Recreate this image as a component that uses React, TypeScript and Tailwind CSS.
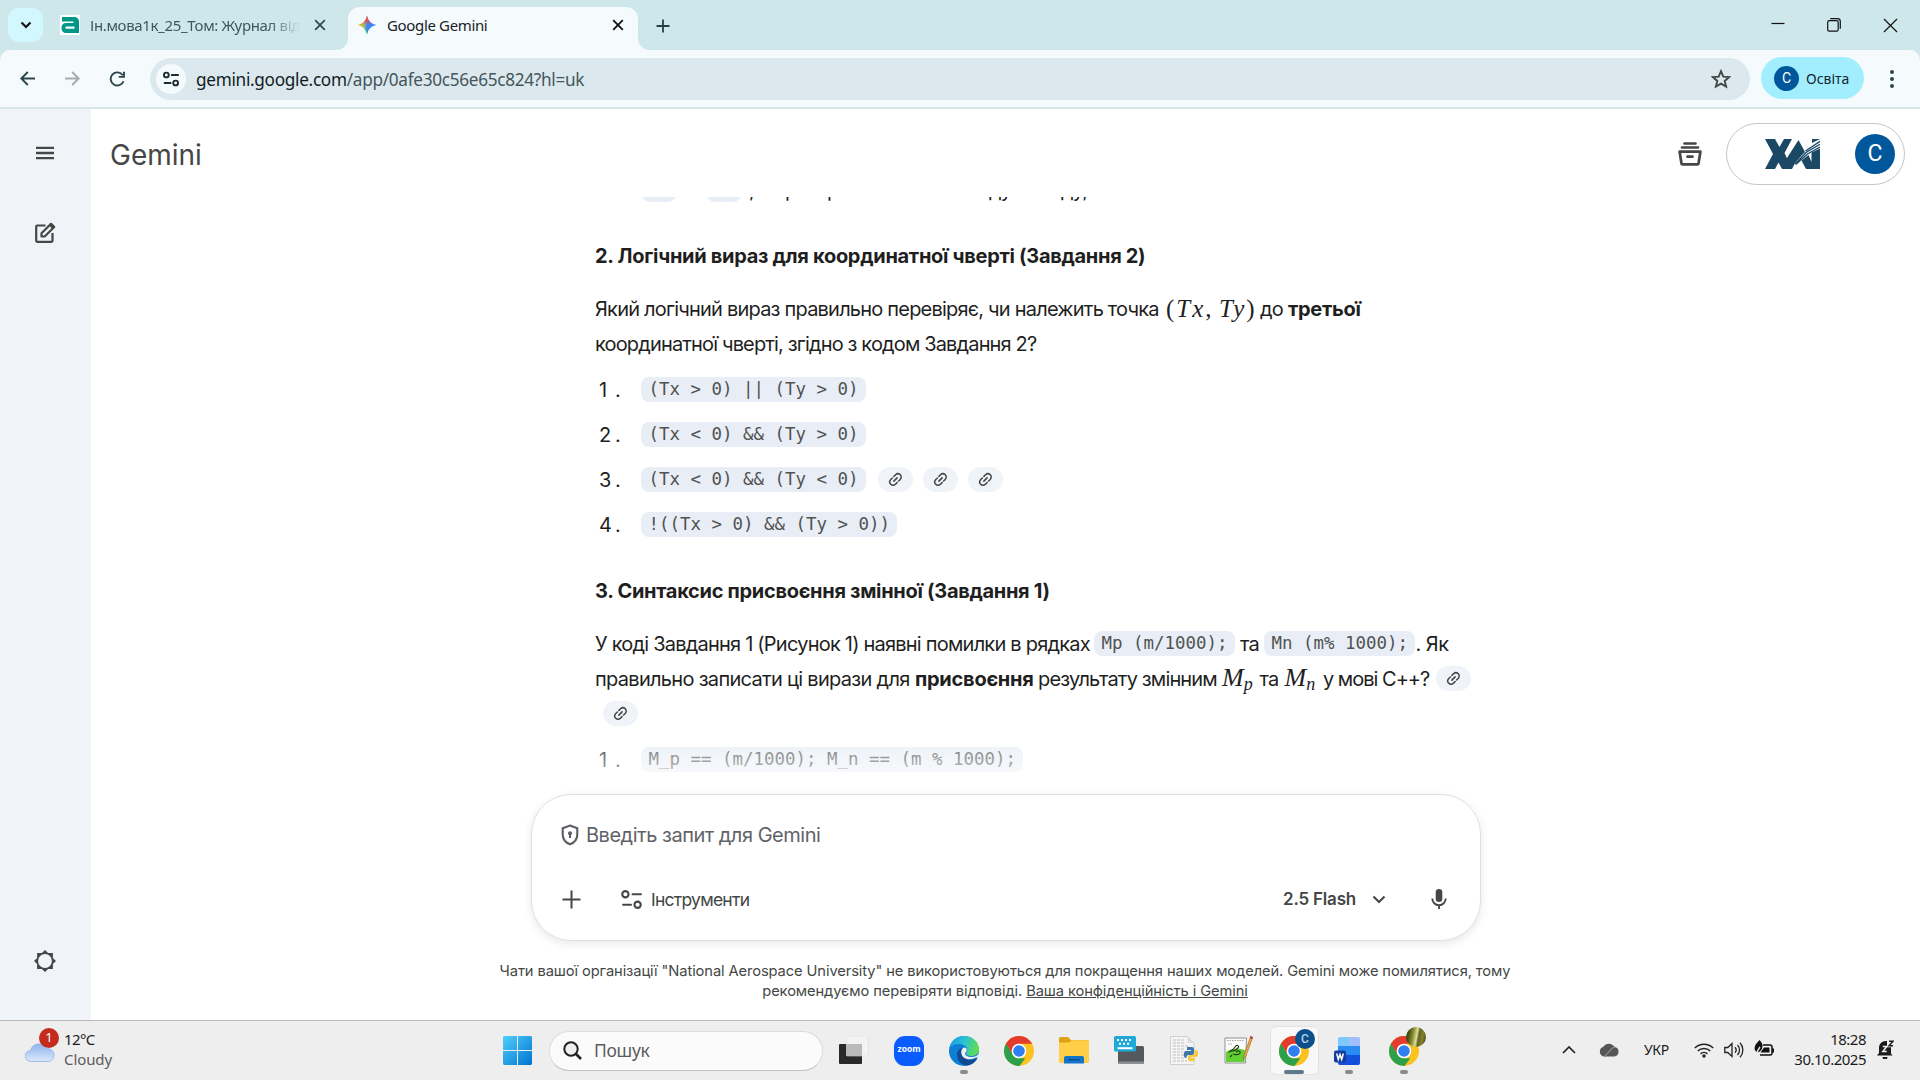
import type { ReactNode } from "react";

function Segment({ className = "", children }: { className?: string; children: ReactNode }) {
  return <span className={`shrink-0 whitespace-pre ${className}`}>{children}</span>;
}

function Code({ children, className = "" }: { children: string; className?: string }) {
  return (
    <code
      className={`flex h-[25px] shrink-0 items-center whitespace-pre rounded-[8px] bg-[#e9eef6] px-[7.5px] font-['DejaVu_Sans_Mono','Liberation_Mono',monospace] text-[17.440px] leading-none text-[#505352] ${className}`}
    >
      {children}
    </code>
  );
}

function LinkChip({ className = "" }: { className?: string }) {
  return (
    <span className={`flex h-[25px] w-[35px] shrink-0 items-center justify-center rounded-full bg-[#f0f4f9] ${className}`}>
      <svg width="15" height="15" viewBox="0 0 15 15" fill="none" stroke="#444746" strokeWidth="1.5" strokeLinecap="round">
        <g transform="rotate(-45 7.5 7.5)">
          <path d="M6.4 4.2H4.1a3.3 3.3 0 0 0 0 6.600h2.3M8.6 4.2h2.3a3.3 3.3 0 0 1 0 6.600H8.6M5.2 7.5h4.6" />
        </g>
      </svg>
    </span>
  );
}

function CloseIcon({ color }: { color: string }) {
  return (
    <svg width="12" height="12" viewBox="0 0 12 12" stroke={color} strokeWidth="1.8">
      <path d="M1.2 1.2l9.6 9.6M10.8 1.2l-9.6 9.6" />
    </svg>
  );
}

function TuneIcon({ size, width }: { size: number; width: number }) {
  return (
    <svg width={size} height={size} viewBox="0 0 20 20" fill="none" stroke="currentColor" strokeWidth={width} strokeLinecap="round">
      <circle cx="4.2" cy="5" r="3" />
      <path d="M11 5h8M2 15h7.5" />
      <circle cx="15.8" cy="15" r="3" />
    </svg>
  );
}

function TabStrip() {
  return (
    <div className="flex h-[50px] bg-[#cee7eb]">
      <div className="ml-2 mt-2 flex h-[34px] w-[35px] items-center justify-center rounded-[11px] bg-[#d3f7ff]">
        <svg width="12" height="8" viewBox="0 0 12 8" fill="none" stroke="#111" strokeWidth="2.2">
          <path d="M1.5 1.5L6 6l4.5-4.5" />
        </svg>
      </div>
      <div className="ml-[17px] flex h-[50px] w-[288px] items-center">
        <svg width="20" height="20" viewBox="0 0 20 20">
          <rect width="20" height="20" fill="#fff" />
          <path d="M2 2h12.500a4.500 4.500 0 0 1 4.500 4.500v11.500H6a4.500 4.500 0 0 1-4.500-4.500v-1A4.500 4.500 0 0 1 6 8h7.500V6.500H2z" fill="#009688" />
          <path d="M14.500 11.500H6.500a1 1 0 0 0 0 2.300h8z" fill="#fff" />
        </svg>
        <div className="ml-[10px] w-[210px] overflow-hidden whitespace-nowrap font-['Noto_Sans','Open_Sans',sans-serif] text-[15px] tracking-[-0.35px] text-[#40565c] [mask-image:linear-gradient(to_right,#000_85%,transparent)]">
          Ін.мова1к_25_Том: Журнал відвідування
        </div>
        <div className="ml-[14px] flex">
          <CloseIcon color="#354a50" />
        </div>
      </div>
      <div className="relative mt-[7px] flex h-[43px] w-[290px] items-center rounded-t-[12px] bg-[#f5fafd] pb-[7px]">
        <svg className="absolute -left-3 bottom-0" width="12" height="12" viewBox="0 0 12 12">
          <path d="M12 0v12H0A12 12 0 0 0 12 0z" fill="#f5fafd" />
        </svg>
        <svg className="absolute -right-3 bottom-0" width="12" height="12" viewBox="0 0 12 12">
          <path d="M0 0v12h12A12 12 0 0 1 0 0z" fill="#f5fafd" />
        </svg>
        <svg className="ml-[9px]" width="20" height="20" viewBox="0 0 20 20">
          <defs>
            <linearGradient id="spark" x1="0" y1="0" x2="1" y2="0">
              <stop offset="0" stopColor="#fbbc04" />
              <stop offset=".35" stopColor="#9dc06a" />
              <stop offset=".5" stopColor="#3b86f7" />
              <stop offset="1" stopColor="#3186ff" />
            </linearGradient>
            <linearGradient id="sparkRed" x1="0" y1="0" x2="0" y2="1">
              <stop offset="0" stopColor="#ff4641" />
              <stop offset=".25" stopColor="#ff4641" stopOpacity=".85" />
              <stop offset=".5" stopColor="#ff4641" stopOpacity="0" />
              <stop offset=".65" stopColor="#0ebc5f" stopOpacity="0" />
              <stop offset="1" stopColor="#0ebc5f" />
            </linearGradient>
          </defs>
          <path d="M10 .5C11.2 6 14 8.8 19.5 10 14 11.2 11.2 14 10 19.5 8.800 14 6 11.200.5 10 6 8.800 8.800 6 10 .5z" fill="url(#spark)" />
          <path d="M10 .5C11.2 6 14 8.8 19.5 10 14 11.2 11.2 14 10 19.5 8.800 14 6 11.200.5 10 6 8.800 8.800 6 10 .5z" fill="url(#sparkRed)" />
        </svg>
        <div className="ml-[10px] w-[225px] whitespace-nowrap font-['Noto_Sans','Open_Sans',sans-serif] text-[15px] tracking-[-0.35px] text-[#1a2225]">
          Google Gemini
        </div>
        <CloseIcon color="#111" />
      </div>
      <svg className="ml-[18px] mt-[19px]" width="14" height="14" viewBox="0 0 14 14" stroke="#263e45" strokeWidth="1.8">
        <path d="M7 .5v13M.5 7h13" />
      </svg>
      <div className="ml-auto flex h-[50px] items-center gap-[42px] pr-[22px]">
        <svg width="14" height="14" viewBox="0 0 14 14">
          <path d="M.5 5.500h13" stroke="#111" strokeWidth="1.200" />
        </svg>
        <svg width="14" height="14" viewBox="0 0 14 14" fill="none" stroke="#111" strokeWidth="1.200">
          <rect x=".7" y="2.700" width="10.500" height="10.500" rx="1.500" />
          <path d="M3.200 .7h7.300a2.800 2.800 0 0 1 2.800 2.800v7.300" />
        </svg>
        <svg width="15" height="15" viewBox="0 0 15 15" stroke="#111" strokeWidth="1.200">
          <path d="M1 1l13 13M14 1L1 14" />
        </svg>
      </div>
    </div>
  );
}

function Toolbar() {
  return (
    <div className="bg-[#cee7eb]">
      <div className="flex h-[59px] items-start rounded-t-[10px] border-b-2 border-[#d9e4e8] bg-[#f5fafd]">
        <div className="flex h-[57px] w-[150px] items-center pl-[20px]">
          <svg width="15" height="15" viewBox="0 0 15 15" fill="none" stroke="#2c464d" strokeWidth="1.900">
            <path d="M15 7.500H1.500M7.800 1L1.300 7.500l6.500 6.500" />
          </svg>
          <svg className="ml-[30px]" width="15" height="15" viewBox="0 0 15 15" fill="none" stroke="#a4abae" strokeWidth="1.900">
            <path d="M0 7.500h13.500M7.200 1l6.500 6.500L7.200 14" />
          </svg>
          <svg className="ml-[29px]" width="16" height="16" viewBox="0 0 16 16" fill="none" stroke="#2c464d" strokeWidth="1.900">
            <path d="M14.500 10.200A6.600 6.600 0 1 1 13.800 4.300M15 .7v5.200H9.800" />
          </svg>
        </div>
        <div className="mt-2 flex h-[42px] w-[1600px] items-center rounded-full bg-[#dbe9ee] pl-[6px]">
          <div className="flex size-[30px] items-center justify-center rounded-full bg-[#f5fafd] text-[#1c2b30]">
            <TuneIcon size={16} width={2.4} />
          </div>
          <div className="ml-[10px] mt-px whitespace-nowrap font-['Noto_Sans','Open_Sans',sans-serif] text-[17.200px] tracking-[-0.3px] text-[#45555a]">
            <span className="text-[#111b1e]">gemini.google.com</span>/app/0afe30c56e65c824?hl=uk
          </div>
          <svg className="ml-auto mr-[19px]" width="20" height="20" viewBox="0 0 20 20" fill="none" stroke="#42484a" strokeWidth="1.900">
            <path d="M10 2.200l2.300 5.400 5.900.5-4.500 3.800 1.400 5.700-5.100-3-5.100 3 1.400-5.700L1.800 8.100l5.900-.5z" />
          </svg>
        </div>
        <div className="ml-[11px] mt-[7px] flex h-[42px] w-[103px] items-center rounded-full bg-[#a2eeff] pl-[13px]">
          <div className="flex size-[25px] items-center justify-center rounded-full bg-[#01579b] font-[Roboto,sans-serif] text-[14px] text-white">C</div>
          <div className="ml-[7px] whitespace-nowrap font-['Noto_Sans','Open_Sans',sans-serif] text-[14px] text-[#10282e]">Освіта</div>
        </div>
        <div className="ml-[26px] mt-[20px] flex flex-col gap-[3.300px]">
          <span className="size-[3.700px] rounded-full bg-[#2c464d]" />
          <span className="size-[3.700px] rounded-full bg-[#2c464d]" />
          <span className="size-[3.700px] rounded-full bg-[#2c464d]" />
        </div>
      </div>
    </div>
  );
}

function Sidebar() {
  return (
    <div className="flex w-[91px] flex-col items-center bg-[#f0f4f9] pr-px">
      <svg className="mt-[37px]" width="18" height="14" viewBox="0 0 18 14" stroke="#444746" strokeWidth="2.300">
        <path d="M0 1.800h18M0 7h18M0 12.200h18" />
      </svg>
      <svg className="mt-[62px]" width="22" height="22" viewBox="0 0 22 22" fill="none" stroke="#444746" strokeWidth="2.200">
        <path d="M11.500 3.500H3.200a1 1 0 0 0-1 1v14.300a1 1 0 0 0 1 1h14.300a1 1 0 0 0 1-1V11" />
        <path d="M7.500 14.500v-3.200L17 1.800l3.200 3.200-9.500 9.500z" strokeLinejoin="round" />
        <path d="M15 3.500L18.500 7 21 4.500 17.500 1z" fill="#444746" stroke="none" />
      </svg>
      <svg className="mb-[47px] mt-auto" width="24" height="24" viewBox="0 0 24 24" fill="#444746">
        <path
          fillRule="evenodd"
          d="M12 1l3.100 3.100h4.800v4.800L23 12l-3.100 3.100v4.800h-4.800L12 23l-3.100-3.100H4.100v-4.800L1 12l3.100-3.100V4.100h4.800zM12 5.100a6.900 6.900 0 1 0 0 13.800 6.900 6.900 0 0 0 0-13.800z"
        />
      </svg>
    </div>
  );
}

function AppHeader() {
  return (
    <div className="flex h-[88px] shrink-0 items-start pl-[19px]">
      <div className="mt-[27px] font-[Inter,sans-serif] text-[28px] leading-[38px] text-[#444746]">Gemini</div>
      <svg className="ml-auto mr-[24px] mt-[33px]" width="24" height="24" viewBox="0 0 24 24" fill="none" stroke="#444746" strokeWidth="2.700" strokeLinejoin="round">
        <path d="M6.500 1.500h11M4 5.500h16" strokeLinecap="round" />
        <path d="M1.600 9.700h20.800l-1.900 11.800a1 1 0 0 1-1 .9H4.500a1 1 0 0 1-1-.9z" />
        <path d="M9.500 14.700h5" strokeLinecap="round" />
      </svg>
      <div className="mr-[15px] mt-[14px] flex h-[62px] w-[179px] items-center rounded-full border border-[#c4c7c5] pl-[38px]">
        <svg width="55" height="30" viewBox="0 0 55 30" fill="#1b4965">
          <path d="M0 0h10l4.500 8L19 0h8l-7.500 14L27 30H17l-3.500-6.500L10 30H0l8-15z" />
          <path d="M33.500 1L40 13l-3.500 3.500L29.500 25 27 30H17l5-11z" />
          <path d="M36.500 21.500L43.500 16l3 7V13.500L55 9.500V30H41z" />
          <path d="M30 25.300L41 13.500 55 5.200M31 25.300L42.500 15 55 8M40.500 12L55 2.400" fill="none" stroke="#1b4965" strokeWidth="1.300" />
          <path d="M47 4V0h8z" />
        </svg>
        <div className="ml-[35px] flex size-[40px] items-center justify-center rounded-full bg-[#01579b] font-[Roboto,sans-serif] text-[23px] text-white">C</div>
      </div>
    </div>
  );
}

function ListRow({ n, children }: { n: string; children: ReactNode }) {
  return (
    <div className="flex h-[45px] items-center">
      <span className="w-[46px] shrink-0 whitespace-pre pl-[4px] font-[Inter,sans-serif] text-[20px]">
        <span className="inline-block w-[16px]">{n}</span>.
      </span>
      {children}
    </div>
  );
}

function MathVar({ sub }: { sub: string }) {
  return (
    <Segment className="-mt-[2px] flex w-[37.500px] items-baseline font-['Liberation_Serif',serif] text-[26px] italic leading-none tracking-normal">
      M<span className="relative top-[4px] text-[18px]">{sub}</span>
    </Segment>
  );
}

function Conversation() {
  return (
    <div className="relative h-[590px] overflow-hidden pl-[504px] font-[Inter,sans-serif] text-[20px] tracking-[-0.82px] text-[#1f1f1f]">
      <div className="h-[7px] overflow-hidden">
        <div className="-mt-[20px] flex h-[25px] items-center">
          <span className="ml-[47px] h-[25px] w-[34px] rounded-[8px] bg-[#e9eef6]" />
          <span className="ml-[31px] h-[25px] w-[34px] rounded-[8px] bg-[#e9eef6]" />
          <Segment className="ml-[8px] w-[36px]">,</Segment>
          <Segment className="w-[42px]">р</Segment>
          <Segment className="w-[162px]">р</Segment>
          <Segment className="w-[72px]">ду</Segment>
          <Segment>ду,</Segment>
        </div>
      </div>
      <h3 className="mt-[34px] h-[36px] whitespace-nowrap font-bold leading-[36px] tracking-[-0.3px]">2. Логічний вираз для координатної чверті (Завдання 2)</h3>
      <p className="mt-[17px] flex h-[35px] items-center">
        <Segment className="w-[571px] tracking-[-0.79px]">Який логічний вираз правильно перевіряє, чи належить точка</Segment>
        <Segment className="w-[94px] font-['Liberation_Serif',serif] text-[25px] leading-none tracking-[2px]">
          (<i>Tx</i>,<span className="text-[14px]"> </span><i>Ty</i>)
        </Segment>
        <Segment className="w-[28px]">до</Segment>
        <Segment className="font-bold tracking-[-0.3px]">третьої</Segment>
      </p>
      <p className="flex h-[35px] items-center whitespace-nowrap tracking-[-0.85px]">координатної чверті, згідно з кодом Завдання 2?</p>
      <div className="mt-[6px] tracking-normal">
        <ListRow n="1"><Code>{"(Tx > 0) || (Ty > 0)"}</Code></ListRow>
        <ListRow n="2"><Code>{"(Tx < 0) && (Ty > 0)"}</Code></ListRow>
        <ListRow n="3">
          <Code>{"(Tx < 0) && (Ty < 0)"}</Code>
          <LinkChip className="ml-[12px]" />
          <LinkChip className="ml-[10px]" />
          <LinkChip className="ml-[10px]" />
        </ListRow>
        <ListRow n="4"><Code>{"!((Tx > 0) && (Ty > 0))"}</Code></ListRow>
      </div>
      <h3 className="mt-[26px] h-[36px] whitespace-nowrap font-bold leading-[36px] tracking-[-0.3px]">3. Синтаксис присвоєння змінної (Завдання 1)</h3>
      <p className="mt-[17px] flex h-[35px] items-center">
        <Segment className="w-[499px] tracking-[-0.78px]">У коді Завдання 1 (Рисунок 1) наявні помилки в рядках</Segment>
        <Code className="tracking-normal">Mp (m/1000);</Code>
        <Segment className="w-[29px] pl-[5px]">та</Segment>
        <Code className="tracking-normal">Mn (m% 1000);</Code>
        <Segment className="tracking-[-0.5px]">. Як</Segment>
      </p>
      <p className="flex h-[35px] items-center">
        <Segment className="w-[320px] tracking-[-0.7px]">правильно записати ці вирази для</Segment>
        <Segment className="w-[123px] font-bold tracking-[-0.25px]">присвоєння</Segment>
        <Segment className="w-[184px] tracking-[-0.85px]">результату змінним</Segment>
        <MathVar sub="p" />
        <Segment className="w-[25px]">та</Segment>
        <MathVar sub="n" />
        <Segment className="w-[114px] pl-px tracking-[-1px]">у мові C++?</Segment>
        <LinkChip />
      </p>
      <div className="flex h-[35px] items-center pl-[8px]">
        <LinkChip />
      </div>
      <div className="mt-[6px] tracking-normal">
        <ListRow n="1"><Code>{"M_p == (m/1000); M_n == (m % 1000);"}</Code></ListRow>
      </div>
      <div className="pointer-events-none absolute inset-x-0 bottom-0 h-[50px] bg-linear-to-b from-white/15 to-white/80" />
    </div>
  );
}

function PromptBox() {
  return (
    <div className="ml-[440px] mt-[7px] flex h-[147px] w-[950px] shrink-0 flex-col rounded-[40px] border border-[#dde1e6] bg-white text-[#444746] shadow-[0_3px_10px_rgba(0,0,0,0.09)]">
      <div className="mt-[27px] flex h-[26px] items-center pl-[29px]">
        <svg width="18" height="22" viewBox="0 0 18 22" fill="none" stroke="#5a5e63" strokeWidth="2.100">
          <path d="M9 1.500l7.300 2.700v6.100c0 4.800-3 8.500-7.300 10-4.300-1.500-7.300-5.200-7.300-10V4.200z" />
          <circle cx="9" cy="9.300" r="2" fill="#5a5e63" stroke="none" />
          <path d="M9 10v4" />
        </svg>
        <span className="ml-[7px] whitespace-nowrap font-[Inter,sans-serif] text-[20px] tracking-[-0.48px] text-[#5f6368]">Введіть запит для Gemini</span>
      </div>
      <div className="mt-[34px] flex h-[34px] items-center pl-[30px] pr-[33px]">
        <svg width="19" height="19" viewBox="0 0 19 19" stroke="#444746" strokeWidth="2">
          <path d="M9.500 .5v18M.5 9.500h18" />
        </svg>
        <div className="ml-[40px] mt-px flex">
          <TuneIcon size={21} width={2} />
        </div>
        <span className="ml-[9px] mt-[2px] whitespace-nowrap font-[Inter,sans-serif] text-[17.500px] tracking-[-0.75px]">Інструменти</span>
        <span className="ml-auto mt-px whitespace-nowrap font-[Inter,sans-serif] text-[17px] font-semibold tracking-[-0.2px]">2.5 Flash</span>
        <svg className="ml-[16px]" width="14" height="9" viewBox="0 0 14 9" fill="none" stroke="#444746" strokeWidth="2.100">
          <path d="M1.500 1.500L7 7l5.500-5.500" />
        </svg>
        <svg className="ml-[45px]" width="16" height="20" viewBox="0 0 16 20" fill="none" stroke="#444746" strokeWidth="1.900">
          <rect x="4.700" y="0" width="6.600" height="13" rx="3.300" fill="#444746" stroke="none" />
          <path d="M1.300 9.500a6.700 6.700 0 0 0 13.400 0M8 16v4" />
        </svg>
      </div>
    </div>
  );
}

function ChromeLogo({ id }: { id: string }) {
  return (
    <svg width="30" height="30" viewBox="0 0 30 30">
      <defs>
        <clipPath id={id}><circle cx="15" cy="15" r="15" /></clipPath>
      </defs>
      <g clipPath={`url(#${id})`}>
        <rect width="30" height="30" fill="#fcc31e" />
        <path d="M2 7l6.700 11.600A7.300 7.300 0 0 0 15 22.300h6.300L14 32H-2V0z" fill="#2da04c" />
        <path d="M2 7.500L0 0h30v7.700H15a7.300 7.300 0 0 0-6.300 10.900z" fill="#e33b2e" />
      </g>
      <circle cx="15" cy="15" r="7.300" fill="#fff" />
      <circle cx="15" cy="15" r="5.800" fill="#2f7ff0" />
    </svg>
  );
}

function TaskCell({ children, mark = "" }: { children: ReactNode; mark?: string }) {
  return (
    <div className="relative flex h-[59px] w-[55px] shrink-0 items-center justify-center">
      {children}
      {mark && <span className={`absolute bottom-[6px] h-[4px] rounded-full ${mark}`} />}
    </div>
  );
}

function Taskbar() {
  return (
    <div className="flex h-[60px] items-center border-t border-[#b9b9b9] bg-[#eee] font-['Noto_Sans','Open_Sans',sans-serif] text-[#1b1b1b]">
      <div className="flex w-[490px] items-center pl-[25px]">
        <div className="relative h-[36px] w-[39px]">
          <svg className="absolute bottom-[7px]" width="30" height="20" viewBox="0 0 30 20">
            <defs>
              <linearGradient id="cloud" x1="0" y1="0" x2="0" y2="1">
                <stop offset="0" stopColor="#8db4ef" />
                <stop offset="1" stopColor="#dce9fb" />
              </linearGradient>
            </defs>
            <path d="M6 19.500a5.500 5.500 0 0 1-.5-11A9 9 0 0 1 22 6.500a6.600 6.600 0 0 1 2 13z" fill="url(#cloud)" stroke="#86a9e6" strokeWidth=".7" />
          </svg>
          <span className="absolute -top-[5px] left-[14px] flex size-[20px] items-center justify-center rounded-full bg-[#c42b1c] text-[13px] text-white">1</span>
        </div>
        <div className="mb-[4px] text-[15px] leading-[20px] tracking-[-0.6px]">
          <div>12°C</div>
          <div className="tracking-[-0.1px] text-[#5c5c5c]">Cloudy</div>
        </div>
      </div>
      <TaskCell>
        <svg width="29" height="29" viewBox="0 0 29 29">
          <defs>
            <linearGradient id="win" x1="0" y1="0" x2="1" y2="1">
              <stop offset="0" stopColor="#4fd0fb" />
              <stop offset="1" stopColor="#0072d0" />
            </linearGradient>
          </defs>
          <path d="M1 0h13v14H0V1zM15 0h13l1 1v13H15zM0 15h14v14H1l-1-1zM15 15h14v13l-1 1H15z" fill="url(#win)" />
        </svg>
      </TaskCell>
      <div className="ml-[4px] flex h-[40px] w-[274px] items-center rounded-full border border-b-[#c4c4c4] border-[#dcdcdc] bg-[#fbfbfb] pl-[13px]">
        <svg width="19" height="19" viewBox="0 0 19 19" fill="none" stroke="#222" strokeWidth="2">
          <circle cx="8" cy="8" r="6.700" fill="#efefef" />
          <path d="M12.500 12.500l5.500 5.500" strokeWidth="2.600" />
        </svg>
        <span className="ml-[12px] text-[17.500px] tracking-[-0.3px] text-[#5c5c5c]">Пошук</span>
      </div>
      <div className="ml-[3.500px] flex">
        <TaskCell>
          <svg className="-mt-[2px]" width="30" height="28" viewBox="0 0 30 28">
            <rect y="8" width="23" height="20" rx="1" fill="#292929" />
            <rect x="7.500" y="0" width="22" height="20" rx="1" fill="#f3f3f3" stroke="#ddd" strokeWidth=".6" />
            <rect x="7.500" y="8" width="15.500" height="12" fill="#bababa" />
          </svg>
        </TaskCell>
        <TaskCell>
          <span className="flex size-[30px] items-center justify-center rounded-[11px] bg-[#0b5cff] pb-[2px] font-['Open_Sans',sans-serif] text-[8.500px] font-bold leading-none text-white">zoom</span>
        </TaskCell>
        <TaskCell mark="w-[8px] bg-[#8a8a8a]">
          <svg width="30" height="30" viewBox="0 0 30 30">
            <defs>
              <linearGradient id="edgeTop" x1="0" y1=".3" x2="1" y2=".5">
                <stop offset="0" stopColor="#1c9be6" />
                <stop offset=".5" stopColor="#2bc3d2" />
                <stop offset="1" stopColor="#62e045" />
              </linearGradient>
            </defs>
            <circle cx="15" cy="15" r="15" fill="#0f7fd6" />
            <path d="M.3 12.500C1.500 5 7.500 0 15 0c8.500 0 15 6 15 13 0 4.500-3.300 7-7.500 7-3.500 0-5.500-1.300-5.500-2.500 0-1 1.500-1.500 1.500-3.500 0-3.500-4-6-8.500-6C5.500 8 2 9.800.3 12.500z" fill="url(#edgeTop)" />
            <path d="M13 12c-4.500 1.500-6 5.500-4.500 10 1.500 4.700 5.500 7.500 9 7.500 4 0 8-2.500 10.500-6.300.5-1-.3-1.200-.8-.8-5.700 2.800-11.700.6-12.700-4.400-.4-2 .2-4-1.500-6z" fill="#114a94" />
            <path d="M30 16.500c-1 3-4 4.600-7.500 4.600-3.500 0-6.500-1.600-6.500-3.400 0-1 1.800-1.700 1.800-3.700 0-1.500-1-2.500-2.300-2.500-2 0-3.400 2.200-3.300 4.700.2 4.500 4 7.200 8.500 7 3-.1 4.700-1 6.500-1.900l1 .7C29.300 20.500 30 18.500 30 16.500z" fill="#eee" />
          </svg>
        </TaskCell>
        <TaskCell><ChromeLogo id="chromeA" /></TaskCell>
        <TaskCell>
          <svg width="30" height="27" viewBox="0 0 30 27">
            <path d="M0 1.500A1.500 1.500 0 0 1 1.500 0H9l3 3h16.500A1.500 1.500 0 0 1 30 4.500V10H0z" fill="#e0a211" />
            <path d="M0 5.500h10l3-2.300h17v21.300a1.500 1.500 0 0 1-1.500 1.500h-27A1.500 1.500 0 0 1 0 24.500z" fill="#ffcf48" />
            <path d="M5 26.500V21a2 2 0 0 1 2-2h16a2 2 0 0 1 2 2v5.500z" fill="#1273c8" />
            <path d="M9 22.700h12" stroke="#0a4a8c" strokeWidth="1.300" />
          </svg>
        </TaskCell>
        <TaskCell>
          <svg className="-mt-px" width="30" height="28" viewBox="0 0 30 28">
            <rect x="4" y="10" width="26" height="18" rx="1.500" fill="#55585c" />
            <rect x="4" y="25.500" width="26" height="2.500" rx="1" fill="#8b9096" />
            <rect width="22" height="15.500" rx="1.500" fill="#1ea9d8" />
            <path d="M3 4h2M7 4h2M11 4h2M15 4h2M5 7.700h2M9 7.700h2M13 7.700h2" stroke="#fff" strokeWidth="2" />
            <path d="M3.500 12.200h15" stroke="#fff" strokeWidth="2" />
          </svg>
        </TaskCell>
        <TaskCell>
          <svg className="-mt-px" width="28" height="29" viewBox="0 0 28 29">
            <path d="M.5.5h17l6.500 6.500v21.500H.5z" fill="#f4f4f4" stroke="#cfcfcf" />
            <path d="M3 4h11M3 7h12M3 10h16M3 13h12M3 16h10M3 19h11M3 22h11M3 25h14" stroke="#cfcfcf" strokeWidth="1.300" strokeDasharray="3 1" />
            <path d="M17.500.5L24 7h-6.500z" fill="#ddd" />
            <path d="M17 11h5a2 2 0 0 1 2 2v4a2 2 0 0 1-2 2h-3.500a2 2 0 0 0-2 2v1H16c-3 0-3-7 0-7h5v-1h-4v-1c0-1.500 0-2 0-2z" fill="#3a76a8" />
            <path d="M24.500 14H26c3 0 3 7 0 7h-5v1h4v1.500c0 2.500-7 2.500-7 0V20.500a1.500 1.500 0 0 1 1.500-1.500H23a1.500 1.500 0 0 0 1.500-1.500z" fill="#fbc839" />
          </svg>
        </TaskCell>
        <TaskCell>
          <svg className="-mt-px" width="30" height="28" viewBox="0 0 30 28">
            <path d="M1 2h21.500l-1 25H1z" fill="#fcfcfc" stroke="#777" strokeWidth=".8" />
            <path d="M2 16c5-4 13-4 19-2l-.5 12H2z" fill="#62d034" />
            <path d="M3 4.500h17M4 8h5" stroke="#a5a5a5" strokeDasharray="1.500 1" />
            <path d="M5 17c0-3 4-2 6-6 2-3 5-1 3 1s-5 4-8 3M12 16c2-2 5-1 4 1s-5 2-7 1M8 19l-2 2" fill="none" stroke="#213c16" strokeWidth="1.100" />
            <path d="M26.500 1l-6.500 18-.7 4.500 2.700-3.500L28.500 2z" fill="#f0a23c" stroke="#8b5a26" strokeWidth=".5" />
            <path d="M26.500 0l2.500 1-.7 2-2.500-1z" fill="#b33" />
          </svg>
        </TaskCell>
        <TaskCell mark="w-[20px] bg-[#607a8a] z-10">
          <span className="relative flex size-[49px] items-center justify-center rounded-[6px] border border-[#e3e3e3] bg-[#f8f8f8]">
            <ChromeLogo id="chromeB" />
            <span className="absolute right-[2.500px] top-[2px] flex size-[20px] items-center justify-center rounded-full bg-[#0b4f8c] font-[Roboto,sans-serif] text-[12px] font-medium text-[#b7d2e8]">C</span>
          </span>
        </TaskCell>
        <TaskCell mark="w-[8px] bg-[#8a8a8a]">
          <svg className="mr-[5px]" width="26" height="28" viewBox="0 0 26 28">
            <path d="M4 2a2 2 0 0 1 2-2h18a2 2 0 0 1 2 2v8H4z" fill="#7fc8fb" />
            <path d="M15 0h9a2 2 0 0 1 2 2v7H15z" fill="#b7b9fb" opacity=".6" />
            <path d="M4 9h22v10H4z" fill="#2a8cf2" />
            <path d="M4 18h22v8a2 2 0 0 1-2 2H6a2 2 0 0 1-2-2z" fill="#1250dc" />
            <rect y="13.500" width="12" height="12" rx="2" fill="#123c9c" />
            <path d="M2.700 16.500l1.600 6L6 17.500l1.700 5 1.600-6" fill="none" stroke="#fff" strokeWidth="1.500" />
          </svg>
        </TaskCell>
        <TaskCell mark="w-[8px] bg-[#8a8a8a]">
          <ChromeLogo id="chromeC" />
          <span className="absolute right-[6px] top-[6px] size-[20px] rounded-full bg-[linear-gradient(100deg,#3f4a14_15%,#8a8c2c_35%,#e0dc9c_52%,#5c6420_62%,#8c8030_78%,#2f3610)]" />
        </TaskCell>
      </div>
      <div className="ml-auto flex h-full items-center pr-[26px]">
        <svg className="mb-[2px]" width="14" height="8" viewBox="0 0 14 8" fill="none" stroke="#222" strokeWidth="1.700">
          <path d="M1 7l6-6 6 6" />
        </svg>
        <svg className="mb-px ml-[23px]" width="20" height="14" viewBox="0 0 20 14">
          <path d="M5 13.500a5 5 0 0 1-.6-9.700A6.500 6.500 0 0 1 15.500 4 4.800 4.800 0 0 1 15.300 13.500z" fill="#555" />
          <path d="M5.500 13.500L13 5.500a5 5 0 0 1 3-1.300" fill="none" stroke="#8a8a8a" strokeWidth="1.200" />
        </svg>
        <span className="mb-[2px] ml-[25px] w-[50px] text-[14px] tracking-[-0.3px]">УКР</span>
        <svg className="mb-[2px]" width="20" height="16" viewBox="0 0 20 16" fill="none" stroke="#222" strokeWidth="1.500">
          <path d="M.8 6a13 13 0 0 1 18.400 0M3.700 9a9 9 0 0 1 12.600 0M6.600 11.900a5 5 0 0 1 6.800 0" />
          <circle cx="10" cy="14" r="1.700" fill="#222" stroke="none" />
        </svg>
        <svg className="mb-px ml-[10px]" width="20" height="16" viewBox="0 0 20 16" fill="none" stroke="#222" strokeWidth="1.300">
          <path d="M.8 5.500h3L8 1.500v13l-4.200-4h-3zM11 5.300a4 4 0 0 1 0 5.400M13.500 3a7.200 7.200 0 0 1 0 10M16 .8a10.500 10.500 0 0 1 0 14.400" />
        </svg>
        <svg className="mb-[4px] ml-[10px]" width="20" height="17" viewBox="0 0 20 17">
          <path d="M9 5h7a2 2 0 0 1 2 2v6a2 2 0 0 1-2 2H6" fill="none" stroke="#111" strokeWidth="1.500" />
          <path d="M18 8.500h2v4h-2zM10 7.500h5.500v5H6.500z" fill="#111" />
          <path d="M5.500 0c3 3 4 6 2 9.500-1 2-3 3-4.500 2.500C0 11 0 6 2.500 3.500z" fill="#111" />
          <path d="M.5 16.500C3 13 4 9.500 6 7" stroke="#eee" strokeWidth="1.300" fill="none" />
        </svg>
        <div className="mb-[4px] ml-[15px] w-[77px] whitespace-nowrap text-right text-[15px] leading-[20px] tracking-[-0.5px]">
          <div>18:28</div>
          <div>30.10.2025</div>
        </div>
        <svg className="mb-[2px] ml-[11px]" width="17" height="19" viewBox="0 0 17 19">
          <path d="M2 7a6.500 6.500 0 0 1 6.500-6H10v5h4v7.500l1.500 2H0l2-2.500zM5.500 17h5a2.500 2.500 0 0 1-5 0z" fill="#1b1b1b" />
          <path d="M5.800 6.500h4l-4 5h4" fill="none" stroke="#eee" strokeWidth="1.500" />
          <path d="M12 1.200h4l-4 4.500h4" fill="none" stroke="#eee" strokeWidth="3" />
          <path d="M12 1.200h4l-4 4.500h4" fill="none" stroke="#1b1b1b" strokeWidth="1.400" />
        </svg>
      </div>
    </div>
  );
}

export default function App() {
  return (
    <div className="flex h-[1080px] w-[1920px] flex-col overflow-hidden bg-white">
      <TabStrip />
      <Toolbar />
      <div className="flex h-[911px]">
        <Sidebar />
        <main className="flex w-[1829px] flex-col">
          <AppHeader />
          <Conversation />
          <PromptBox />
          <div className="mt-[20px] w-[1828px] whitespace-nowrap text-center font-[Inter,sans-serif] text-[14.700px] leading-[20px] tracking-[-0.1px] text-[#444746]">
            <div>Чати вашої організації "National Aerospace University" не використовуються для покращення наших моделей. Gemini може помилятися, тому</div>
            <div>рекомендуємо перевіряти відповіді. <a className="underline">Ваша конфіденційність і Gemini</a></div>
          </div>
        </main>
      </div>
      <Taskbar />
    </div>
  );
}
